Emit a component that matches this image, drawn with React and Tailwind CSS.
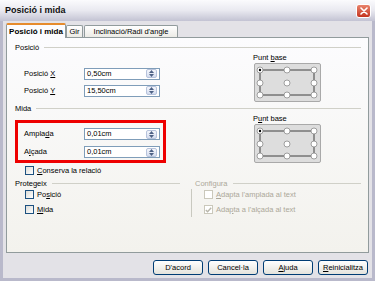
import React from 'react';

function Heading({ label, disabled = false, className = '' }) {
  return (
    <div className={`flex shrink-0 items-center h-[11px] gap-[5px] ${className}`}>
      <span className={`leading-none ${disabled ? 'text-[#aca899]' : 'text-black'}`}>{label}</span>
      <div className="flex-1 h-px bg-[#d0d0c8]" />
    </div>
  );
}

function Spin() {
  return (
    <div className="flex flex-col items-center justify-center gap-[1px] w-[11px] h-[9px] rounded-[2px] border border-[#b7c3dc] bg-linear-to-b from-[#f5f7fc] to-[#d4dcee]">
      <svg width="5" height="3" viewBox="0 0 5 3"><path d="M0 3 L2.5 0 L5 3Z" fill="#4d6185" /></svg>
      <svg width="5" height="3" viewBox="0 0 5 3"><path d="M0 0 L5 0 L2.5 3Z" fill="#4d6185" /></svg>
    </div>
  );
}

function Field({ value }) {
  return (
    <div className="flex items-center w-[76px] h-[12px] bg-white border border-[#7f9db9] pl-[2px] pr-[2px]">
      <span className="flex-1 leading-none">{value}</span>
      <Spin />
    </div>
  );
}

function Row({ children, value, h = 'h-[13px]' }) {
  return (
    <div className={`flex items-center ${h}`}>
      <span className="w-[60px] leading-none">{children}</span>
      <Field value={value} />
    </div>
  );
}

function Check({ children, checked = false, disabled = false }) {
  return (
    <div className="flex items-center h-[11px] gap-[3px]">
      <div
        className={`flex items-center justify-center w-[9px] h-[9px] border ${
          disabled ? 'border-[#cac8bb] bg-white' : 'border-[#1c5180] bg-linear-to-br from-[#dcdcd7] to-white'
        }`}
      >
        {checked && (
          <svg width="7" height="6" viewBox="0 0 7 6">
            <path d="M0.8 3 L2.6 4.8 L6.2 0.8" stroke="#b8b6aa" strokeWidth="1.4" fill="none" />
          </svg>
        )}
      </div>
      <span className={`leading-none ${disabled ? 'text-[#aca899]' : 'text-black'}`}>{children}</span>
    </div>
  );
}

function PuntBase() {
  const xs = [6, 33, 60];
  const ys = [7, 20, 32];
  return (
    <div className="ml-[1px] w-[67px] h-[39px] rounded-[2px] border border-[#a9a9a9] bg-[#dddddd]">
      <svg width="65" height="37" viewBox="1 1 65 37">
        <path d="M6 7 H60 V32 H6 Z" stroke="#404040" strokeWidth="1" fill="none" />
        {ys.map((y) =>
          xs.map((x) => (
            <circle key={`${x}-${y}`} cx={x} cy={y} r="3" fill="#ffffff" stroke="#8a8a8a" strokeWidth="0.8" />
          ))
        )}
        <circle cx="6" cy="7" r="1.2" fill="#000000" />
      </svg>
    </div>
  );
}

function Button({ children }) {
  return (
    <button className="flex items-center justify-center w-[50px] h-[15px] rounded-[3px] border border-[#003c74] bg-linear-to-b from-white to-[#e4e3dc] text-black leading-none">
      <span>{children}</span>
    </button>
  );
}

export default function App() {
  return (
    <div className="w-[375px] h-[281px] flex flex-col bg-[#b9b9cb] font-['Liberation_Sans',Arial,sans-serif] text-[7.5px] text-black overflow-hidden">
      {/* title bar */}
      <div className="flex shrink-0 items-center justify-between h-[21px] pl-[5px] pr-[4px] bg-linear-to-b from-[#fbfbfd] via-[#e9e9f0] to-[#c3c3d3]">
        <span className="text-[9px] font-bold text-[#101010] leading-none">Posició i mida</span>
        <div className="flex items-center justify-center w-[15px] h-[14px] rounded-[3px] border border-white bg-linear-to-b from-[#e8826c] to-[#c4321c]">
          <svg width="8" height="8" viewBox="0 0 8 8">
            <path d="M1 1 L7 7 M7 1 L1 7" stroke="white" strokeWidth="1.6" strokeLinecap="round" />
          </svg>
        </div>
      </div>

      {/* body */}
      <div className="flex-1 flex flex-col mx-[3px] mb-[3px] bg-[#e3e2e7] px-[3px]">
        {/* tabs */}
        <div className="flex shrink-0 items-start h-[15px] mt-[2px] -mb-px relative z-10">
          <div className="flex items-center justify-center w-[60px] h-[15px] bg-[#fcfcfe] border-x border-[#919b9c] border-t-2 border-t-[#e68b2c] rounded-t-[2px]">
            <span className="text-[8px] font-bold leading-none">Posició i mida</span>
          </div>
          <div className="flex items-center justify-center w-[17px] h-[12px] mt-[2px] border border-b-0 border-[#919b9c] rounded-t-[2px] bg-linear-to-b from-white to-[#ecebe6]">
            <span className="leading-none">Gir</span>
          </div>
          <div className="flex items-center justify-center w-[94px] h-[12px] mt-[2px] ml-px border border-b-0 border-[#919b9c] rounded-t-[2px] bg-linear-to-b from-white to-[#ecebe6]">
            <span className="leading-none">Inclinació/Radi d'angle</span>
          </div>
        </div>

        {/* panel */}
        <div className="flex shrink-0 flex-col h-[216px] border border-[#919b9c] bg-linear-to-b from-[#fcfcfe] to-[#f3f2ed] pl-[8px] pr-[7px] pt-[4px]">
          <Heading label="Posició" />
          <div className="flex shrink-0">
            <div className="w-[238px] flex flex-col pt-[14px] gap-[4px] pl-[9px]">
              <Row value="0,50cm">Posició <u>X</u></Row>
              <Row value="15,50cm">Posició <u>Y</u></Row>
            </div>
            <div className="flex flex-col items-start">
              <div className="h-[10px] leading-[10px]">Punt <u>b</u>ase</div>
              <PuntBase />
            </div>
          </div>

          <Heading label="Mida" className="mt-[1px]" />
          <div className="flex shrink-0">
            <div className="w-[238px] flex flex-col">
              <div className="mt-[6px] w-[151px] h-[43px] border-[3px] border-[#ee0000] flex flex-col pl-[6px] pt-[5px] gap-[6px]">
                <Row value="0,01cm" h="h-[12px]">Ampla<u>d</u>a</Row>
                <Row value="0,01cm" h="h-[12px]">A<u>l</u>çada</Row>
              </div>
              <div className="mt-[2px] pl-[10px]">
                <Check><u>C</u>onserva la relació</Check>
              </div>
            </div>
            <div className="flex flex-col items-start">
              <div className="h-[10px] leading-[10px]">P<u>u</u>nt base</div>
              <PuntBase />
            </div>
          </div>

          <div className="flex shrink-0 mt-[2px]">
            <Heading label="Protegeix" className="w-[165px]" />
            <Heading label="Configura" disabled className="flex-1 ml-[11px] pl-[4px]" />
          </div>
          <div className="flex shrink-0">
            <div className="w-[176px] flex flex-col gap-[4px] pl-[10px]">
              <Check>Po<u>s</u>ició</Check>
              <Check><u>M</u>ida</Check>
            </div>
            <div className="flex flex-col gap-[4px] border-l border-[#c9c9c0] pl-[12px] pb-[2px]">
              <Check disabled><u>A</u>dapta l'amplada al text</Check>
              <Check disabled checked>Ada<u>p</u>ta a l'alçada al text</Check>
            </div>
          </div>
        </div>

        {/* buttons */}
        <div className="flex shrink-0 justify-end gap-[5px] mt-[7px] pr-[1px]">
          <Button>D'acord</Button>
          <Button>Cancel·la</Button>
          <Button><u>A</u>juda</Button>
          <Button><u>R</u>einicialitza</Button>
        </div>
      </div>
    </div>
  );
}
